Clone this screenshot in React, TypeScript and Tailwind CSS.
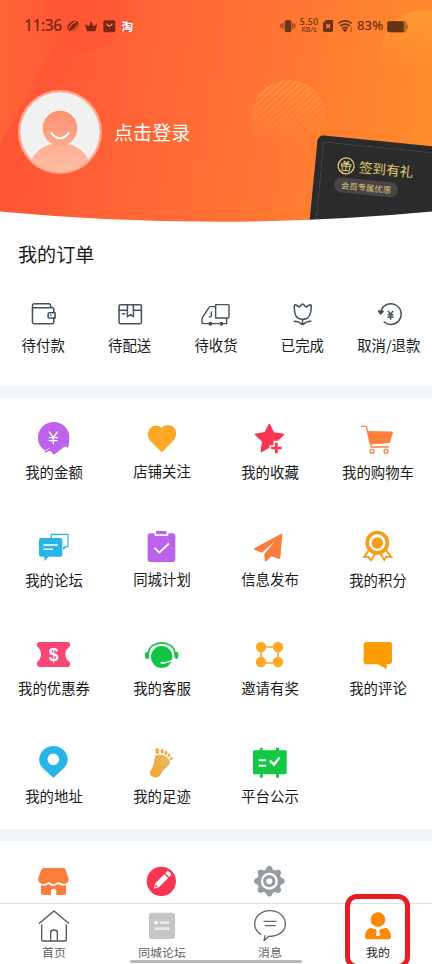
import type { ReactNode } from "react";

type Item = { label: string; box: string; icon: ReactNode; gap?: string };

function Glyph({ box, children, className = "" }: { box: string; children: ReactNode; className?: string }) {
  return (
    <svg viewBox={box} className={`block size-9 shrink-0 ${className}`} fill="none" strokeLinecap="round" strokeLinejoin="round">
      {children}
    </svg>
  );
}

const orders: Item[] = [
  {
    label: "待付款",
    box: "75.6 183 108 108",
    icon: (
      <g stroke="#46535e" strokeWidth="4.6">
        <path d="M98 216v46q0 4 4 4h56q4 0 4-4v-12M162 232v-10q0-4-4-4h-56q-4 0-4-5t4-7h46q4 0 5 10" />
        <path d="M166 233h-18q-3 0-3 4v8q0 4 3 4h18z" />
        <path d="M152 241h1" />
      </g>
    ),
  },
  {
    label: "待配送",
    box: "334.8 183 108 108",
    icon: (
      <g stroke="#46535e" strokeWidth="4.6">
        <rect x="356" y="209" width="67" height="57" rx="4" />
        <path d="M356 226h24M400 226h23M381 209v36l9-6 9 6v-36M366 236h7" />
      </g>
    ),
  },
  {
    label: "待收货",
    box: "594 183 108 108",
    icon: (
      <g stroke="#46535e" strokeWidth="4.2">
        <path d="M646 215h-14q-4 0-6 4l-17 26q-3 4-3 9v9q0 3 3 3h16M638 266h18M671 266h9v-15" />
        <path d="M647 209h37q3 0 3 3v33q0 4-4 4h-36zM634 231v10q0 5-6 5" />
        <circle cx="631" cy="266" r="4" fill="#46535e" />
        <circle cx="664" cy="266" r="4" fill="#46535e" />
      </g>
    ),
  },
  {
    label: "已完成",
    box: "205.2 183 108 108",
    icon: (
      <g stroke="#46535e" strokeWidth="4.6">
        <path d="M236 213q0-5 5-3l10 6 7-7q3-4 6 0l7 7 11-6q5-2 5 3c0 26-6 40-26 40s-25-14-25-40zM261 254v14M236 259q16 1 22 9M286 259q-16 1-22 9" />
      </g>
    ),
  },
  {
    label: "取消/退款",
    box: "464.4 183 108 108",
    icon: (
      <g stroke="#46535e" strokeWidth="4.6">
        <path d="M494 229a31 31 0 1 1 10 32" />
        <path d="M487 228l6 9 8-8z" fill="#46535e" />
        <path d="M515 228l8 9 8-9M523 237v17M514 239h18M514 246h18" strokeLinecap="butt" />
      </g>
    ),
  },
];

const services: Item[] = [
  {
    label: "我的金额",
    box: "108 30 108 108",
    gap: "mt-[4.5px]",
    icon: (
      <>
        <circle cx="161" cy="83" r="47" fill="#bd62ea" />
        <path d="M128 126l20-13 14 15 37-28 25 4v40h-96z" fill="#fff" />
        <path d="M137 125q8-4 12-8l13 14 34-26M192 102l13-2-3 10z" stroke="#bd62ea" strokeWidth="5" />
        <path d="M148 66l12 17 12-17M160 83v18M148 83h24M148 92h24" stroke="#fff" strokeWidth="4" />
      </>
    ),
  },
  {
    label: "店铺关注",
    box: "432 30 108 108",
    gap: "mt-[4px]",
    icon: <path d="M485 54c-10-12-28-9-36 2-9 13-6 27 2 36l31 32q3 3 7 0l31-32c10-10 12-26 3-38-9-11-27-12-38 0z" fill="#ffa726" />,
  },
  {
    label: "我的收藏",
    box: "108 30 108 108",
    gap: "mt-[4.5px]",
    icon: (
      <>
        <path d="M160 43l13 26 30 4-22 22 4 28-25-12-24 14 4-31-22-21 29-5z" fill="#fb3452" stroke="#fb3452" strokeWidth="4" />
        <path d="M181 92v42M160 114h42" stroke="#fff" strokeWidth="17" strokeLinecap="butt" />
        <path d="M181 98v32M165 114h32" stroke="#fb3452" strokeWidth="8" strokeLinecap="butt" />
      </>
    ),
  },
  {
    label: "我的购物车",
    box: "432 30 108 108",
    gap: "mt-[4.5px]",
    icon: (
      <g stroke="#ff7f3a">
        <path d="M436 49h13q2 0 3 4l14 58h52" strokeWidth="4" />
        <path d="M455 64l75 2-9 32-58 4z" fill="#ff7f3a" strokeWidth="2" />
        <circle cx="468" cy="124" r="6" strokeWidth="4" />
        <circle cx="510" cy="124" r="6" strokeWidth="4" />
      </g>
    ),
  },
  {
    label: "我的论坛",
    box: "108 354 108 108",
    gap: "mt-[5px]",
    icon: (
      <>
        <path d="M154 384v-11h50v37h-7l-6 7v-5" stroke="#26b6e5" strokeWidth="3.6" />
        <path d="M123 384h58q6 0 6 6v44q0 6-6 6h-35l-13 13v-13h-10q-6 0-6-6v-44q0-6 6-6z" fill="#26b6e5" />
        <path d="M132 405h40M132 418h25" stroke="#fff" strokeWidth="4.5" />
      </>
    ),
  },
  {
    label: "同城计划",
    box: "432 354 108 108",
    gap: "mt-[4px]",
    icon: (
      <>
        <rect x="443" y="370" width="83" height="86" rx="8" fill="#bd62ea" />
        <rect x="463" y="360" width="42" height="18" rx="4" fill="#fff" />
        <rect x="468" y="363" width="31" height="10" rx="1" fill="#bd62ea" />
        <path d="M465 415l13 13 27-26" stroke="#fff" strokeWidth="5.5" />
      </>
    ),
  },
  {
    label: "信息发布",
    box: "108 354 108 108",
    gap: "mt-[4px]",
    icon: (
      <path d="M196 371q4-3 3 2l-6 70q0 5-5 3l-22-7-14 14q-5 3-6-2l-1-19 32-39-39 35-22-9q-5-2 0-5z" fill="#fb7d3c" />
    ),
  },
  {
    label: "我的积分",
    box: "432 354 108 108",
    gap: "mt-[5px]",
    icon: (
      <>
        <path d="M457 422l-13 19 13-1 8 11 14-23M511 422l15 19-15-1-6 10-14-22" stroke="#f69d14" strokeWidth="5.5" fill="#fff" strokeLinejoin="miter" />
        <circle cx="484" cy="398" r="36" fill="#f69d14" />
        <circle cx="484" cy="398" r="25" fill="#fff" />
        <circle cx="484" cy="399" r="17" fill="#f69d14" />
      </>
    ),
  },
  {
    label: "我的优惠券",
    box: "108 48 108 108",
    gap: "mt-[5px]",
    icon: (
      <>
        <path d="M117 66h86q7 0 7 8v5c-9 6-14 14-14 24s5 18 14 24v6q0 8-7 8h-86q-6 0-6-8v-6c8-6 12-14 12-24s-4-18-12-24v-5q0-8 6-8z" fill="#fb4572" />
        <text x="161" y="123" textAnchor="middle" fontFamily="Liberation Sans, sans-serif" fontSize="53" fontWeight="700" fill="#fff">$</text>
      </>
    ),
  },
  {
    label: "我的客服",
    box: "432 48 108 108",
    gap: "mt-[5px]",
    icon: (
      <>
        <path d="M445 101c1-43 79-43 80 0" stroke="#0fc744" strokeWidth="5" />
        <path d="M447 96v20h-7q-5 0-5-5v-10q0-5 5-5zM523 96v20h7q5 0 5-5v-10q0-5-5-5z" fill="#0fc744" />
        <ellipse cx="485" cy="111" rx="32" ry="33" fill="#0fc744" />
        <path d="M484 129q27-1 41-15" stroke="#fff" strokeWidth="3.5" />
        <ellipse cx="489" cy="128" rx="8" ry="3" fill="#fff" />
      </>
    ),
  },
  {
    label: "邀请有奖",
    box: "108 48 108 108",
    gap: "mt-[4.5px]",
    icon: (
      <g fill="#ffa726">
        <path d="M135 81h51v48h-51z" fill="none" stroke="#ffa726" strokeWidth="5" />
        <circle cx="135" cy="81" r="15.5" />
        <circle cx="186" cy="81" r="15.5" />
        <circle cx="135" cy="126" r="15.5" />
        <circle cx="186" cy="126" r="15.5" />
      </g>
    ),
  },
  {
    label: "我的评论",
    box: "432 48 108 108",
    gap: "mt-[4.5px]",
    icon: <path d="M451 66h69q8 0 8 8v50q0 8-7 8h-9v15l-27-14h-34q-8 0-8-8v-51q0-8 8-8z" fill="#ff9d00" />,
  },
  {
    label: "我的地址",
    box: "108 372 108 108",
    gap: "mt-[4.5px]",
    icon: (
      <>
        <path d="M160 473l-29-26c-30-27-6-69 29-69s60 41 29 69z" fill="#26b6e5" />
        <circle cx="160" cy="418" r="17.5" fill="#fff" />
      </>
    ),
  },
  {
    label: "我的足迹",
    box: "432 372 108 108",
    gap: "mt-[5px]",
    icon: (
      <>
        <defs>
          <linearGradient id="foot" x1="0" y1="1" x2="1" y2="0">
            <stop offset="0" stopColor="#f5a329" />
            <stop offset="1" stopColor="#e6bd68" />
          </linearGradient>
        </defs>
        <g fill="url(#foot)">
          <path d="M464 413c2-10 16-13 30-6 14 6 19 15 14 25-5 11-17 15-22 24-5 11-11 18-22 16-13-2-18-12-11-22 9-12 9-24 11-37z" />
          <ellipse cx="472" cy="393" rx="6" ry="9" />
          <ellipse cx="487" cy="394" rx="5" ry="7" />
          <ellipse cx="498" cy="399" rx="4.5" ry="6" transform="rotate(20 498 399)" />
          <ellipse cx="507" cy="406" rx="4" ry="5.5" transform="rotate(30 507 406)" />
          <ellipse cx="514" cy="415" rx="4" ry="5" transform="rotate(35 514 415)" />
        </g>
      </>
    ),
  },
  {
    label: "平台公示",
    box: "108 372 108 108",
    gap: "mt-[4.5px]",
    icon: (
      <>
        <path d="M132 383h8v8h40v-8h9v8h19q4 0 4 4v64q0 4-4 4h-19v10h-9v-10h-40v10h-8v-10h-17q-4 0-4-4v-64q0-4 4-4h17z" fill="#12c943" />
        <path d="M128 421h22M128 437h22" stroke="#fff" strokeWidth="6" strokeLinecap="butt" />
        <path d="M162 422l12 12 17-22" stroke="#fff" strokeWidth="7" strokeLinecap="butt" strokeLinejoin="miter" />
      </>
    ),
  },
];

const teeth = [0, 45, 90, 135, 180, 225, 270, 315];

const more: { box: string; icon: ReactNode }[] = [
  {
    box: "108 117 108 108",
    icon: (
      <>
        <path d="M132 132h57q5 0 7 4l9 25c4 12-4 19-15 18-8 0-10-4-14-4-5 0-8 6-15 6s-9-6-14-6-8 5-15 5c-12 0-20-8-17-19l9-24q3-5 8-5z" fill="#fb7d3c" />
        <path d="M123 184q15 3 23-4 14 12 28 0 10 7 24 4v23q0 6-6 6h-23v-13q0-6-8-6t-8 6v13h-23q-7 0-7-6z" fill="#fb7d3c" />
      </>
    ),
  },
  {
    box: "432 117 108 108",
    icon: (
      <>
        <circle cx="484" cy="172" r="44" fill="#fb3452" />
        <g transform="translate(484 171) rotate(45)" fill="#fff">
          <path d="M-8-21H8V17L0 33-8 17zM-8-32q0-4 4-4h8q4 0 4 4v7H-8z" />
          <path d="M-4 19H4L1 25h-2z" fill="#fb3452" />
        </g>
      </>
    ),
  },
  {
    box: "108 117 108 108",
    icon: (
      <g fill="#979ca4">
        {teeth.map((a) => (
          <path key={a} d="M-13-30L-7-43Q0-49 7-43L13-30z" transform={`translate(160 171.500) rotate(${a})`} />
        ))}
        <circle cx="160" cy="171.500" r="36" />
        <circle cx="160" cy="171.500" r="22" fill="none" stroke="#fff" strokeWidth="7" />
        <circle cx="160" cy="171.500" r="9" fill="#fff" />
      </g>
    ),
  },
];

const tabs: (Item & { tone: string })[] = [
  {
    label: "首页",
    tone: "text-[#606060]",
    box: "108 252 108 108",
    icon: (
      <g stroke="#555" strokeWidth="4">
        <path d="M118 298l44-37 44 37M125 303v44q0 4 4 4h66q4 0 4-4v-44M152 350v-24q0-8 10-8t10 8v24" />
      </g>
    ),
  },
  {
    label: "同城论坛",
    tone: "text-[#606060]",
    box: "432 252 108 108",
    icon: (
      <>
        <rect x="447" y="266" width="78" height="79" rx="8" fill="#c5c6c6" />
        <circle cx="468" cy="296" r="5" fill="#fff" />
        <path d="M482 296h23M467 314h38" stroke="#e9e9e9" strokeWidth="8" />
      </>
    ),
  },
  {
    label: "消息",
    tone: "text-[#606060]",
    box: "108 252 108 108",
    icon: (
      <g stroke="#666" strokeWidth="4">
        <path d="M134 331c-12-8-18-19-18-31 0-23 20-40 46-40s46 17 46 39c0 27-25 38-50 38l-14 13 3-15" />
        <path d="M144 292h36M148 305h29" />
      </g>
    ),
  },
  {
    label: "我的",
    tone: "text-[#252525]",
    box: "432 252 108 108",
    icon: (
      <g fill="#fc8a08">
        <circle cx="486" cy="287" r="22" />
        <path d="M463 311q23 9 46 0c12 5 16 16 16 29q0 6-7 6h-64q-7 0-7-6c0-13 4-24 16-29z" />
        <path d="M480 315h12l-2 7 2 13h-12l2-13z" fill="#fff" />
      </g>
    ),
  },
];

function StatusBar() {
  return (
    <div className="relative flex h-[52px] items-center pr-[24px] pl-[24px] font-['Noto_Sans','Noto_Sans_CJK_SC',sans-serif] text-[#7b2615]">
      <span className="w-[37px] text-[15.5px] leading-none font-medium tracking-[-0.4px]">11:36</span>
      <svg viewBox="200 56 201 42" className="ml-[6px] h-[14px] w-[67px]" fill="none">
        <ellipse cx="218" cy="77" rx="19" ry="13" fill="#7b2615" transform="rotate(-38 218 77)" />
        <path d="M205 87q5-17 23-23M210 92q17-5 22-20" stroke="#ff5a35" strokeWidth="3.500" />
        <path d="M254 71l12 7 6-16 7 16 12-7-6 22h-25z" fill="#7b2615" />
        <rect x="309" y="60" width="36" height="36" rx="6" fill="#7b2615" />
        <path d="M318 70q9 14 18 0" stroke="#ff7e60" strokeWidth="4" />
        <rect x="363" y="60" width="36" height="36" rx="4" fill="#e8583e" />
        <text x="381" y="91" textAnchor="middle" fontSize="35" fontWeight="700" fill="#fff">淘</text>
      </svg>
      <div className="ml-auto flex items-center text-[#6d3318]">
        <svg viewBox="188 56 47 42" className="h-[14px] w-[16px]" stroke="#6d3318" strokeWidth="3">
          <rect x="203" y="61" width="17" height="33" rx="3" fill="#6d3318" />
          <path d="M190 72v10M196 68v18M226 68v18M232 72v10" />
        </svg>
        <div className="ml-[3px] flex w-[20px] flex-col items-center leading-none font-medium">
          <span className="text-[8.8px] leading-[8px] tracking-[0.2px]">5.50</span>
          <span className="text-[7px] leading-[8px]">KB/s</span>
        </div>
        <svg viewBox="318 56 93 42" className="ml-[4px] h-[14px] w-[31px]" fill="none">
          <path d="M327 59h21v31q0 5-5 5h-20q-5 0-5-5V68z" fill="#6d3318" />
          <path d="M328 72l11 11M339 72l-11 11" stroke="#ff8a50" strokeWidth="4" />
          <path d="M364 69q20-15 40 0M370 77q14-11 28 0M376 84q8-6 16 0" stroke="#6d3318" strokeWidth="5" />
          <path d="M379 88h10l-5 6zM402 81v4M402 88v6" fill="#6d3318" stroke="#6d3318" strokeWidth="3" />
        </svg>
        <span className="ml-[3px] w-[28px] text-[13.2px] leading-none font-medium">83%</span>
        <svg viewBox="512 56 63 42" className="ml-[2px] h-[14px] w-[21px]">
          <rect x="513" y="63" width="58" height="33" rx="6" fill="#6d3318" opacity=".45" />
          <path d="M519 63h43v33h-43q-6 0-6-6V69q0-6 6-6z" fill="#653411" />
          <rect x="571" y="73" width="4" height="12" rx="2" fill="#6d3318" opacity=".5" />
        </svg>
      </div>
    </div>
  );
}

function Avatar() {
  return (
    <svg viewBox="54 30 252 252" className="size-[84px]" fill="none">
      <defs>
        <clipPath id="face"><circle cx="180" cy="156" r="119" /></clipPath>
        <linearGradient id="head" x1="0" y1="0" x2="0" y2="1"><stop stopColor="#ff9070" /><stop offset="1" stopColor="#fea98c" /></linearGradient>
        <linearGradient id="body" x1="0" y1="0" x2="0" y2="1"><stop stopColor="#feae93" /><stop offset="1" stopColor="#fec6a8" /></linearGradient>
      </defs>
      <circle cx="180" cy="156" r="126" fill="#ffa68e" />
      <circle cx="180" cy="156" r="119" fill="#f1f1f1" />
      <g clipPath="url(#face)">
        <ellipse cx="180" cy="258" rx="88" ry="68" fill="url(#body)" />
        <ellipse cx="180" cy="145" rx="52" ry="53" fill="url(#head)" />
      </g>
      <path d="M154 159q26 32 52 0" stroke="#fff" strokeWidth="6" strokeLinecap="round" />
    </svg>
  );
}

function CheckInCard() {
  return (
    <div className="absolute top-[135px] left-[318px] h-[110px] w-[150px] origin-top-left rotate-[5.6deg] rounded-[6px] bg-[#2b2b2b]">
      <div className="absolute inset-[6px] rounded-[3px] border border-dotted border-[#5c5c5c]" />
      <div className="flex items-center gap-[4px] pt-[17px] pl-[22px] text-[#e2cb78]">
        <svg viewBox="0 0 54 54" className="mt-px size-[18px]" fill="none" stroke="#e2cb78" strokeWidth="4">
          <circle cx="27" cy="27" r="24" />
          <path d="M13 22h28v6H13zM16 28h22v13H16zM27 22v19M27 21q-10-2-7-7 4-3 7 7 3-10 7-7 3 5-7 7" strokeWidth="3" />
        </svg>
        <span className="text-[13.6px] leading-[20px]">签到有礼</span>
      </div>
      <div className="mt-[3px] ml-[21px] flex h-[15px] w-[64px] items-center justify-center rounded-full bg-[#484644] text-[8.4px] leading-none text-[#d9c27a]">
        会员专属优惠
      </div>
    </div>
  );
}

function Header() {
  return (
    <header className="relative h-[222px] shrink-0 overflow-hidden bg-linear-[100deg,#ff5536_8%,#ff6b36_45%,#ff8b2c_95%]">
      <svg viewBox="0 0 432 222" className="absolute inset-0 h-full w-full" fill="none">
        <defs>
          <linearGradient id="sun" x1="0" y1="0" x2="0" y2="1"><stop stopColor="#ffae38" stopOpacity=".5" /><stop offset=".75" stopColor="#ff9a30" stopOpacity="0" /></linearGradient>
          <linearGradient id="fade" x1="0" y1="0" x2="0" y2="1"><stop stopColor="#ffa040" stopOpacity=".6" /><stop offset="1" stopColor="#ff8a35" stopOpacity="0" /></linearGradient>
          <linearGradient id="corner" x1="0" y1="0" x2="1" y2="0"><stop stopColor="#ff7035" stopOpacity=".55" /><stop offset="1" stopColor="#ff7035" stopOpacity="0" /></linearGradient>
          <pattern id="stripe" width="4.600" height="4.600" patternUnits="userSpaceOnUse" patternTransform="rotate(48)"><path d="M0 0h1.800v4.600H0z" fill="#ffb04c" /></pattern>
          <linearGradient id="maskFade" x1="0" y1="0" x2="0" y2="1"><stop stopColor="#fff" stopOpacity=".45" /><stop offset=".85" stopColor="#fff" stopOpacity="0" /></linearGradient>
          <mask id="stripeMask"><circle cx="289" cy="118" r="38" fill="url(#maskFade)" /></mask>
        </defs>
        <path d="M0 0h80L0 145z" fill="url(#corner)" />
        <circle cx="87" cy="9" r="42" fill="#ff4636" opacity=".18" />
        <circle cx="424" cy="54" r="44" fill="url(#sun)" />
        <circle cx="289" cy="118" r="38" fill="url(#fade)" opacity=".4" />
        <circle cx="289" cy="118" r="38" fill="url(#stripe)" mask="url(#stripeMask)" />
      </svg>
      <StatusBar />
      <div className="relative flex items-center gap-[12px] pt-[38px] pl-[18px]">
        <Avatar />
        <span className="text-[19.1px] text-white">点击登录</span>
      </div>
      <CheckInCard />
      <svg viewBox="0 0 432 12" className="absolute bottom-0 left-0 h-[12px] w-full">
        <path d="M0 1.500Q216 22 432 1.500V12H0z" fill="#fff" />
      </svg>
    </header>
  );
}

export default function App() {
  return (
    <div className="relative flex h-[964px] w-[432px] flex-col overflow-hidden bg-white font-['Noto_Sans_CJK_SC',sans-serif] text-[#1a1a1a]">
      <Header />
      <section className="h-[164px] shrink-0 pt-[17px]">
        <h2 className="pl-[18px] text-[19.1px] leading-[30px]">我的订单</h2>
        <div className="mt-[27px] grid grid-cols-5">
          {orders.map((o) => (
            <div key={o.label} className="flex flex-col items-center">
              <Glyph box={o.box}>{o.icon}</Glyph>
              <span className="mt-[2px] text-[14.4px] leading-[22px] whitespace-nowrap">{o.label}</span>
            </div>
          ))}
        </div>
      </section>
      <div className="h-3 shrink-0 bg-[#f2f6f9]" />
      <section className="grid h-[431px] shrink-0 auto-rows-[108px] grid-cols-4 pt-[22px]">
        {services.map((s) => (
          <div key={s.label} className="flex flex-col items-center">
            <Glyph box={s.box}>{s.icon}</Glyph>
            <span className={`${s.gap} text-[14.4px] leading-[22px] whitespace-nowrap`}>{s.label}</span>
          </div>
        ))}
      </section>
      <div className="h-3 shrink-0 bg-[#f2f6f9]" />
      <section className="grid h-[62px] shrink-0 grid-cols-4 justify-items-center pt-[22px]">
        {more.map((m, i) => (
          <Glyph key={i} box={m.box}>{m.icon}</Glyph>
        ))}
      </section>
      <nav className="grid h-[61px] shrink-0 grid-cols-4 border-t border-[#dedfe2] bg-white pt-[4px]">
        {tabs.map((t) => (
          <div key={t.label} className="flex flex-col items-center">
            <Glyph box={t.box}>{t.icon}</Glyph>
            <span className={`-mt-px text-[11.9px] leading-[17px] ${t.tone}`}>{t.label}</span>
          </div>
        ))}
      </nav>
      <div className="absolute top-[960px] left-[130px] h-[3px] w-[172px] rounded-full bg-[#b8b8b8]" />
      <div className="absolute top-[894px] left-[345px] h-[75px] w-[65px] rounded-[12px] border-[5px] border-[#e91c24]" />
    </div>
  );
}
